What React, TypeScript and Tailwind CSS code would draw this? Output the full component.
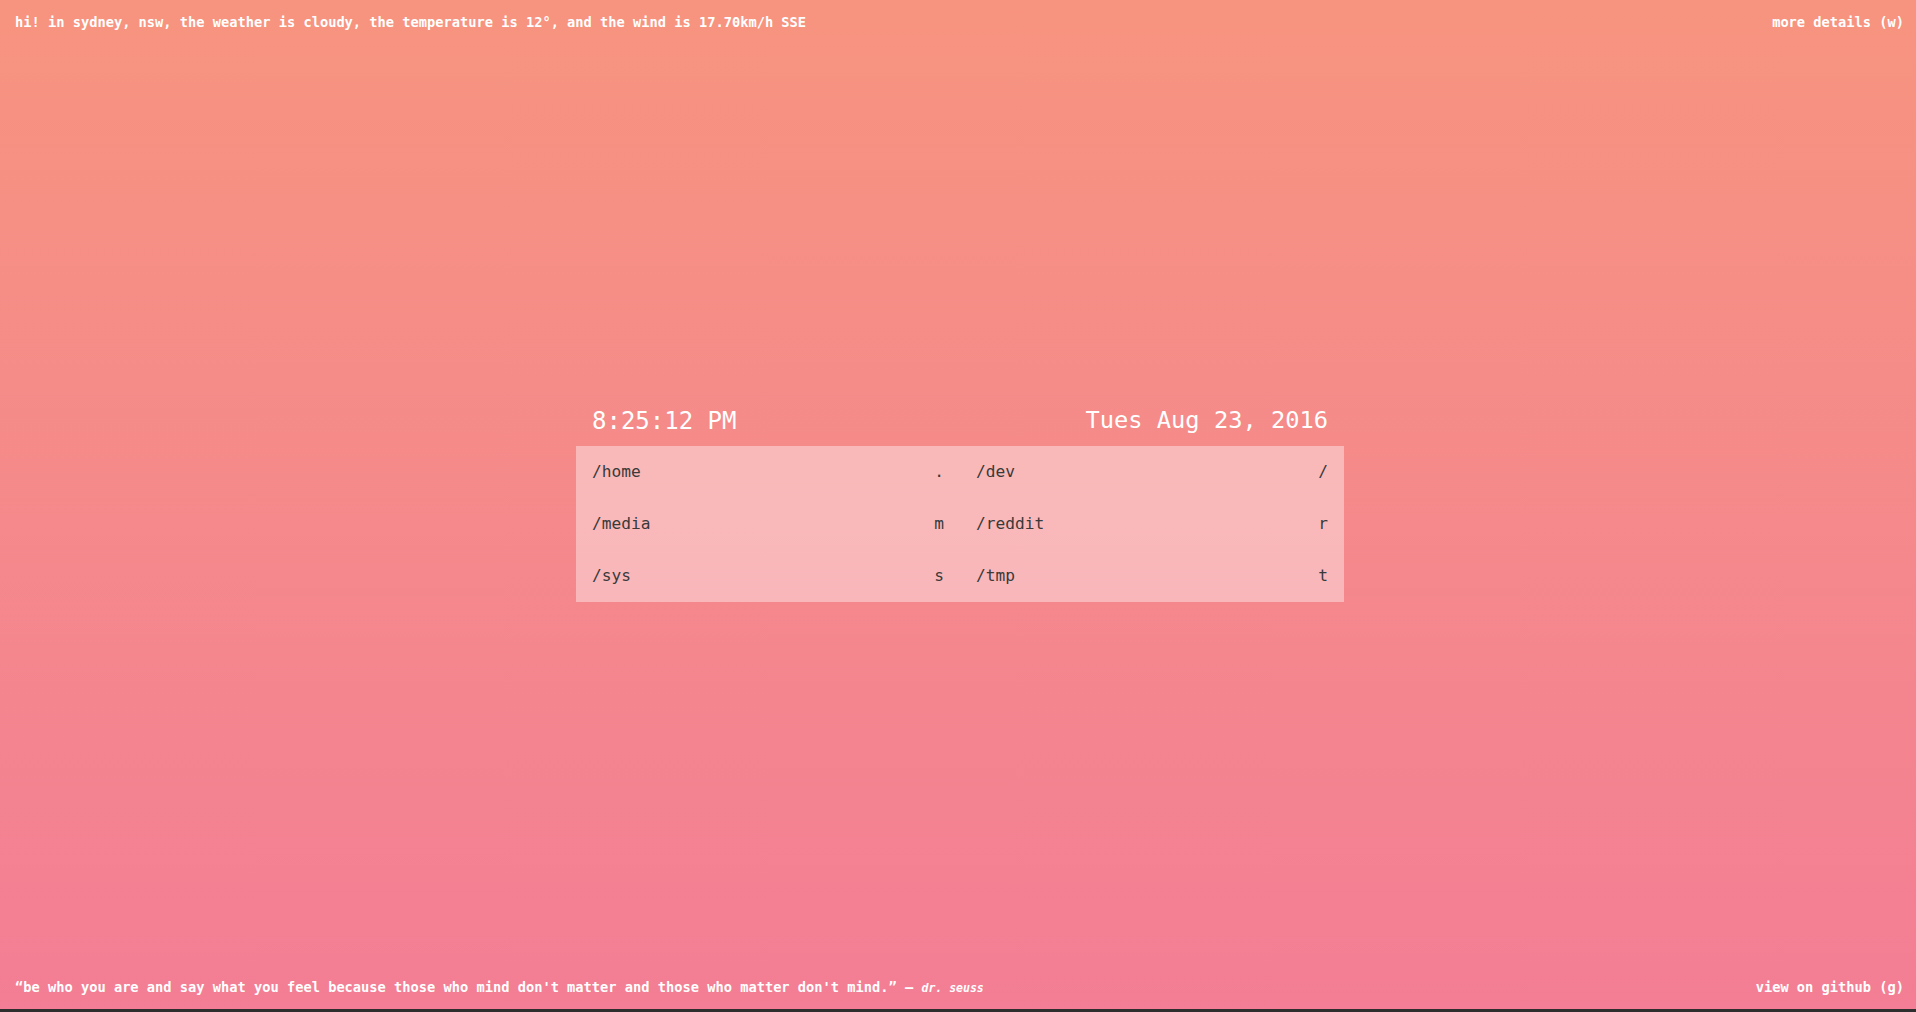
import React from "react";

const mono = { fontFamily: '"DejaVu Sans Mono", "Liberation Mono", monospace' };

const rows: [string, string, string, string][] = [
  ["/home", ".", "/dev", "/"],
  ["/media", "m", "/reddit", "r"],
  ["/sys", "s", "/tmp", "t"],
];

export default function App() {
  return (
    <div
      className="flex h-[1012px] w-full flex-col bg-gradient-to-b from-[#f7947f] to-[#f37e95] text-white"
      style={mono}
    >
      <header className="flex h-[44px] items-center justify-between pl-[15px] pr-[12px] text-[13.7px] font-bold">
        <span>hi! in sydney, nsw, the weather is cloudy, the temperature is 12°, and the wind is 17.70km/h SSE</span>
        <span>more details (w)</span>
      </header>

      <main className="flex flex-1 items-center justify-center pb-[11px]">
        <div className="ml-[4px] w-[768px]">
          <div className="flex h-[50px] items-center justify-between px-4 text-[24px]">
            <span>8:25:12 PM</span>
            <span className="text-[23.7px]">Tues Aug 23, 2016</span>
          </div>
          <div className="grid grid-cols-2 bg-white/40 text-[16.2px] text-[#3a3a3a]">
            {rows.map((r) => (
              <React.Fragment key={r[0]}>
                <div className="flex h-[52px] items-center justify-between px-4">
                  <span>{r[0]}</span>
                  <span>{r[1]}</span>
                </div>
                <div className="flex h-[52px] items-center justify-between px-4">
                  <span>{r[2]}</span>
                  <span>{r[3]}</span>
                </div>
              </React.Fragment>
            ))}
          </div>
        </div>
      </main>

      <footer className="flex h-[44px] items-center justify-between pl-[15px] pr-[12px] text-[13.7px] font-bold">
        <span>
          “be who you are and say what you feel because those who mind don't matter and those who matter don't mind.” —{" "}
          <span className="text-[11.5px] italic">dr. seuss</span>
        </span>
        <span>view on github (g)</span>
      </footer>
      <div className="h-[3px] bg-[#2e2e2e]" />
    </div>
  );
}
